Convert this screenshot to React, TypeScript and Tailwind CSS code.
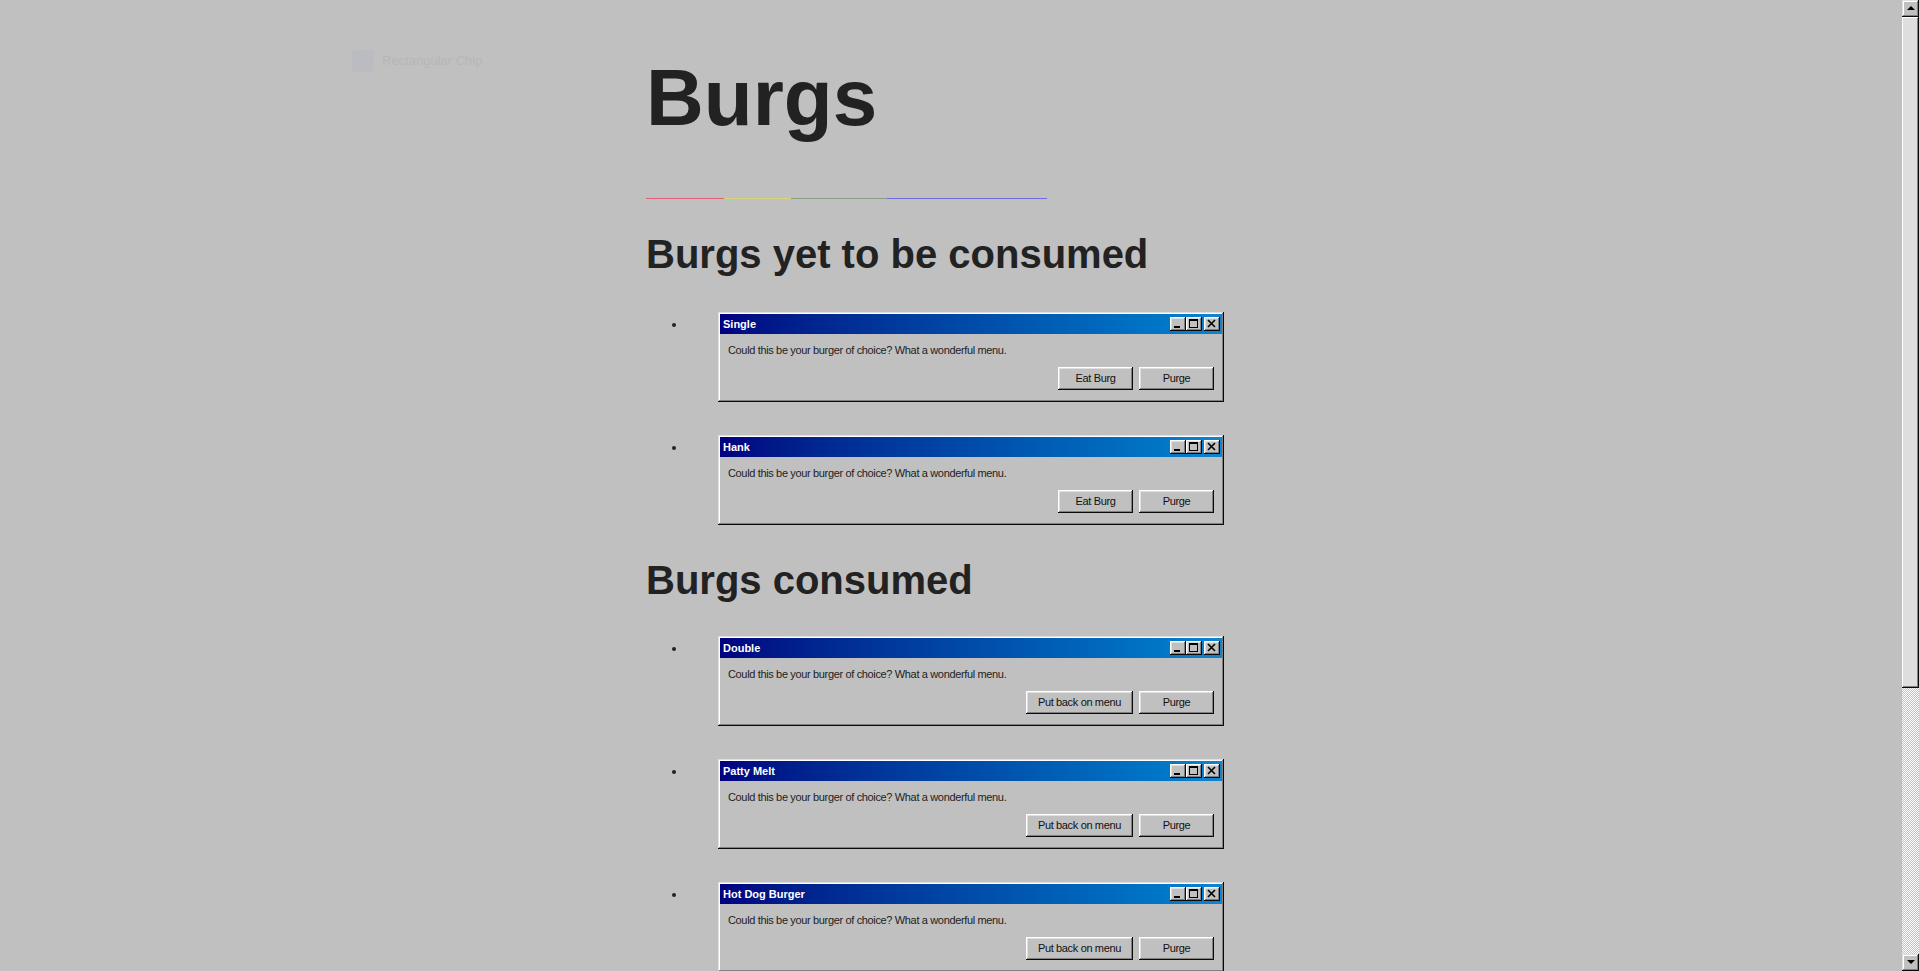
import React from 'react';

const TO_EAT = ['Single', 'Hank'];
const EATEN = ['Double', 'Patty Melt', 'Hot Dog Burger'];

const SANS = "font-['Liberation_Sans',Arial,sans-serif]";

function TitleButton({ kind }: { kind: 'min' | 'max' | 'close' }) {
  return (
    <span className="w-[16px] h-[14px] bg-[#c0c0c0] flex items-center justify-center shadow-[inset_-1px_-1px_#0a0a0a,inset_1px_1px_#ffffff,inset_-2px_-2px_#808080,inset_2px_2px_#dfdfdf]">
      <svg width="16" height="14" viewBox="0 0 16 14">
        {kind === 'min' && <rect x="4" y="9" width="6" height="2" fill="#000" />}
        {kind === 'max' && (
          <>
            <rect x="3.5" y="2.5" width="8" height="8" fill="none" stroke="#000" />
            <rect x="3" y="2" width="9" height="2" fill="#000" />
          </>
        )}
        {kind === 'close' && (
          <path d="M4 3 L11 10 M11 3 L4 10" stroke="#000" strokeWidth="1.6" />
        )}
      </svg>
    </span>
  );
}

function WinButton({ label }: { label: string }) {
  return (
    <button className="h-[23px] min-w-[75px] px-[12px] bg-[#c0c0c0] text-[11px] tracking-[-0.35px] text-[#111] shadow-[inset_-1px_-1px_#0a0a0a,inset_1px_1px_#ffffff,inset_-2px_-2px_#808080,inset_2px_2px_#dfdfdf]">
      {label}
    </button>
  );
}

function BurgWindow({ name, eaten }: { name: string; eaten: boolean }) {
  return (
    <li className="flex items-start pl-[26px]">
      <span className="mt-[11px] w-[4px] h-[4px] rounded-full bg-[#222]" />
      <div className="ml-[42px] w-[506px] bg-[#c0c0c0] p-[2px] shadow-[inset_-1px_-1px_#0a0a0a,inset_1px_1px_#dfdfdf,inset_-2px_-2px_#808080,inset_2px_2px_#ffffff]">
        <div className="h-[20px] flex items-center justify-between pl-[3px] pr-[2px] bg-linear-to-r from-[#000080] to-[#1084d0]">
          <span className="text-[11px] font-bold text-white">{name}</span>
          <div className="flex items-center">
            <TitleButton kind="min" />
            <TitleButton kind="max" />
            <span className="w-[2px]" />
            <TitleButton kind="close" />
          </div>
        </div>
        <div className="pt-[9px] pb-[10px] px-[8px]">
          <p className="h-[14px] leading-[14px] text-[11px] tracking-[-0.35px] text-[#222]">
            Could this be your burger of choice? What a wonderful menu.
          </p>
          <div className="mt-[10px] flex justify-end gap-[6px]">
            <WinButton label={eaten ? 'Put back on menu' : 'Eat Burg'} />
            <WinButton label="Purge" />
          </div>
        </div>
      </div>
    </li>
  );
}

function ScrollArrow({ up }: { up: boolean }) {
  return (
    <div className="h-[17px] w-[17px] bg-[#c0c0c0] flex items-center justify-center shadow-[inset_-1px_-1px_#0a0a0a,inset_1px_1px_#dfdfdf,inset_-2px_-2px_#808080,inset_2px_2px_#ffffff]">
      <svg width="8" height="5" viewBox="0 0 8 5">
        {up ? <path d="M0 4 L4 0 L8 4 Z" fill="#000" /> : <path d="M0 0 L8 0 L4 4 Z" fill="#000" />}
      </svg>
    </div>
  );
}

export default function App() {
  return (
    <div className={`h-screen flex overflow-hidden bg-[#c0c0c0] ${SANS}`}>
      <div className="flex-1 flex overflow-hidden">
        {/* faint sidebar badge */}
        <div className="w-[646px] shrink-0 pl-[352px] pt-[50px]">
          <div className="flex items-center gap-[8px]">
            <span className="w-[22px] h-[22px] rounded-sm bg-[#babcc2]" />
            <span className="text-[13px] text-[#b6b6ba]">Rectangular Chip</span>
          </div>
        </div>

        {/* content */}
        <div className="flex-1 pt-[58px] text-[#222]">
          <h1 className="h-[80px] text-[80px] leading-none font-bold">Burgs</h1>
          <div className="mt-[60px] flex h-px">
            <span className="w-[78px] bg-[#e0607a]" />
            <span className="w-[67px] bg-[#d8d47a]" />
            <span className="w-[96px] bg-[#88a088]" />
            <span className="w-[160px] bg-[#6e6edc]" />
          </div>

          <h2 className="mt-[35px] h-[40px] text-[40px] leading-none font-bold">Burgs yet to be consumed</h2>
          <ul className="mt-[38px] flex flex-col gap-[33px]">
            {TO_EAT.map((n) => (
              <BurgWindow key={n} name={n} eaten={false} />
            ))}
          </ul>

          <h2 className="mt-[35px] h-[40px] text-[40px] leading-none font-bold">Burgs consumed</h2>
          <ul className="mt-[36px] flex flex-col gap-[33px]">
            {EATEN.map((n) => (
              <BurgWindow key={n} name={n} eaten={true} />
            ))}
          </ul>
        </div>
      </div>

      {/* scrollbar */}
      <div className="w-[17px] h-screen flex flex-col shrink-0">
        <ScrollArrow up />
        <div className="h-[671px] bg-[#dedede] shadow-[inset_-1px_-1px_#0a0a0a,inset_1px_1px_#ffffff,inset_-2px_-2px_#808080]" />
        <div className="flex-1 bg-[image:repeating-conic-gradient(#c0c0c0_0%_25%,#ffffff_0%_50%)] bg-[length:2px_2px]" />
        <ScrollArrow up={false} />
      </div>
    </div>
  );
}
